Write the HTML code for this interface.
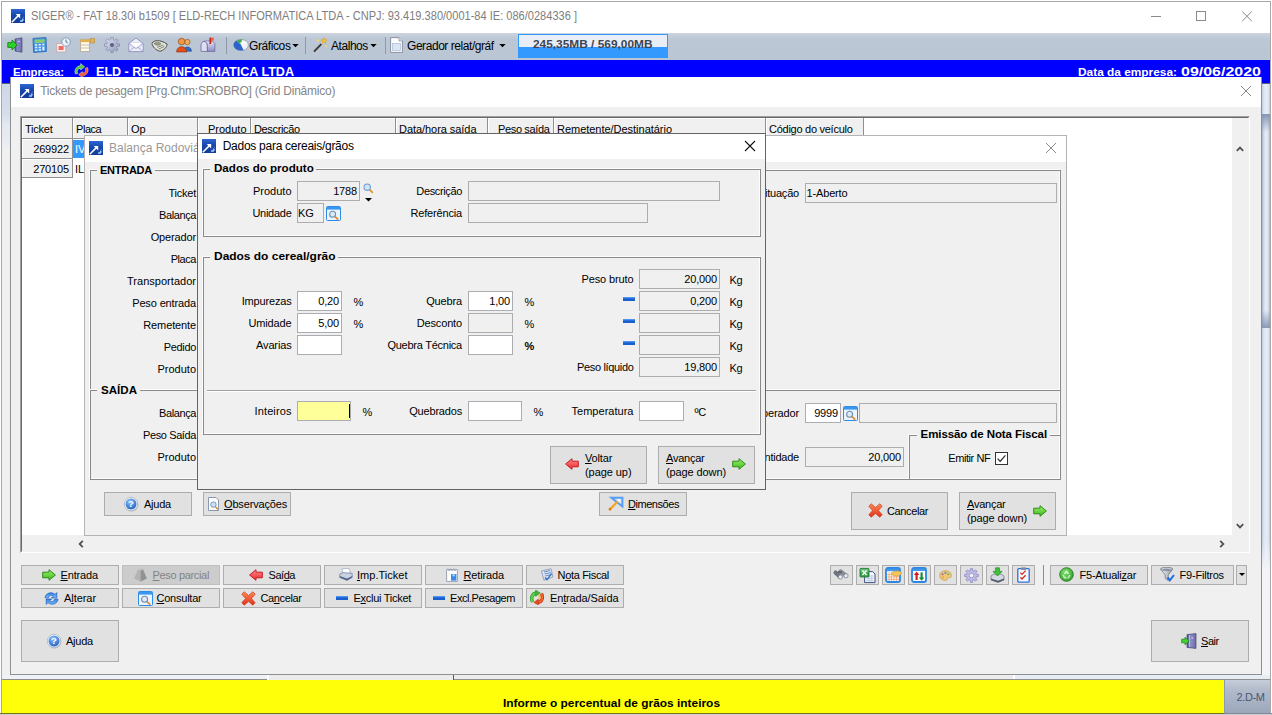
<!DOCTYPE html><html><head><meta charset="utf-8"><title>SIGER</title><style>
html,body{margin:0;padding:0;overflow:hidden}
body{width:1272px;height:715px;overflow:hidden;background:#fff;position:relative;font-family:"Liberation Sans",sans-serif;font-size:11px;color:#000}
div,span,svg{position:absolute;box-sizing:border-box}
.t{white-space:nowrap;line-height:14px;height:14px;letter-spacing:-0.15px}
.r{text-align:right}
.b{font-weight:bold}
.in{border:1px solid #adadad;background:#f0f0f0}
.iw{border:1px solid #abadb3;background:#fff}
.btn{border:1px solid #adadad;background:#e1e1e1}
.gb{border:1px solid #8a8a8a;box-shadow:-1px -1px 0 #fdfdfd,inset -1px -1px 0 #fdfdfd}
.gl{background:#f0f0f0;font-weight:bold;font-size:11.5px;line-height:14px;height:14px;white-space:nowrap;padding:0 3px 0 3px}
.win{background:#f0f0f0}
.tt{font-size:12px;line-height:16px;height:16px;white-space:nowrap}
.hc{background:#f0f0f0;border-right:1px solid #909090;border-bottom:1px solid #909090;box-shadow:inset 1px 1px 0 #fff}
u{text-decoration:underline}
</style></head><body>
<div class="" style="left:0px;top:0px;width:1272px;height:715px;background:#fff"></div>
<div class="" style="left:1px;top:1px;width:1270px;height:713px;border:1px solid #a8a8a8;background:#fff"></div>
<svg style="left:11px;top:9px" width="14" height="14" viewBox="0 0 14 14"><defs><linearGradient id="ai119" x1="0" y1="0" x2="0" y2="1"><stop offset="0" stop-color="#2c66d4"/><stop offset="0.45" stop-color="#1746ac"/><stop offset="1" stop-color="#143c98"/></linearGradient></defs><rect width="14" height="14" fill="url(#ai119)"/><path d="M0.8 13.2 L7.6 6.4" stroke="#fff" stroke-width="1.5" fill="none"/><path d="M4.6 5 H9.2 V9.6 Z" fill="#fff"/><path d="M8.6 12.6 L10 10.4 L10.6 11.4 L12.6 7 L12 10.6 L13.4 10 L11.4 13 Z" fill="#9cc8f8"/></svg>
<span class="t sx" id="t1" style="left:31px;top:9px;letter-spacing:0;transform:scaleX(0.8986);transform-origin:left center;color:#7e7e7e;font-size:12.3px">SIGER® - FAT 18.30i b1509 [ ELD-RECH INFORMATICA LTDA - CNPJ: 93.419.380/0001-84 IE: 086/0284336 ]</span>
<svg style="left:1146px;top:6px" width="112" height="20" viewBox="0 0 112 20"><path d="M5 10.5 H15" stroke="#8a8a8a" stroke-width="1"/><rect x="50.5" y="5.5" width="9" height="9" fill="none" stroke="#8a8a8a"/><path d="M96.2 5.5 L105.8 15.1 M105.8 5.5 L96.2 15.1" stroke="#8a8a8a" stroke-width="1"/></svg>
<div class="" style="left:2px;top:33px;width:1268px;height:27px;background:linear-gradient(#ccd4df 0,#bcc7d6 6px,#bbc6d5 100%)"></div>
<svg style="left:7px;top:37px" width="16" height="16" viewBox="0 0 16 16"><defs><linearGradient id="dg1" x1="0" y1="0" x2="1" y2="0"><stop offset="0" stop-color="#54548e"/><stop offset="0.35" stop-color="#8a8ac4"/><stop offset="1" stop-color="#6e6eaa"/></linearGradient></defs><path d="M8 2 L15 0.8 V15.2 L8 14 Z" fill="url(#dg1)" stroke="#4a4a80" stroke-width="0.7"/><path d="M11.2 4.4 h1.6" stroke="#e8e8ff" stroke-width="1"/><path d="M0.8 5.6 H5 V3 L10 8 L5 13 V10.4 H0.8 Z" fill="#2fd02a" stroke="#168a14" stroke-width="0.9" stroke-linejoin="round"/></svg>
<svg style="left:32px;top:37px" width="15" height="16" viewBox="0 0 15 16"><path d="M1 1.4 L14 0.6 L14.4 14.4 L1.6 15.4 Z" fill="#4a98e4" stroke="#2a6ab8" stroke-width="0.9"/><path d="M2.6 2.8 L12.6 2.2 L12.7 5.6 L2.7 6.2 Z" fill="#86cc70"/><path d="M3 8 h2.2 M6.6 7.8 h2.2 M10.2 7.6 h2.2 M3.1 10.6 h2.2 M6.7 10.4 h2.2 M3.2 13.2 h2.2 M6.8 13 h2.2" stroke="#dff0ff" stroke-width="1.5"/><path d="M11.4 9.6 V13.4" stroke="#dff0ff" stroke-width="2"/></svg>
<svg style="left:56px;top:37px" width="15" height="16" viewBox="0 0 15 16"><rect x="0.8" y="6.4" width="9" height="8.6" fill="#fbeeee" stroke="#c9a6a6" stroke-width="0.8"/><rect x="2.6" y="9" width="5" height="4" fill="#ee6a5a"/><circle cx="10" cy="5" r="4.2" fill="#eaf2fb" stroke="#7d95b8" stroke-width="0.9"/><path d="M10 2.6 V5 L11.8 6" stroke="#47648e" stroke-width="0.9" fill="none"/></svg>
<svg style="left:80px;top:38px" width="15" height="14" viewBox="0 0 15 14"><rect x="0.6" y="1.6" width="9" height="11.8" fill="#fffaf0" stroke="#b2a78e" stroke-width="0.8"/><rect x="0.6" y="1.6" width="9" height="2.6" fill="#e9b04a"/><path d="M1 7 H9.4 M1 10 H9.4" stroke="#b8b09a" stroke-width="0.8"/><rect x="10.6" y="0.6" width="4" height="4.4" fill="#e9b04a" stroke="#b2904a" stroke-width="0.6"/></svg>
<svg style="left:104px;top:37px" width="16" height="16" viewBox="0 0 16 16"><defs><linearGradient id="gg1" x1="0" y1="0" x2="1" y2="1"><stop offset="0" stop-color="#e4e6f4"/><stop offset="1" stop-color="#9094b8"/></linearGradient></defs><path d="M15.50 6.75 L15.50 9.25 L13.23 9.34 L12.65 10.75 L14.18 12.42 L12.42 14.18 L10.75 12.65 L9.34 13.23 L9.25 15.50 L6.75 15.50 L6.66 13.23 L5.25 12.65 L3.58 14.18 L1.82 12.42 L3.35 10.75 L2.77 9.34 L0.50 9.25 L0.50 6.75 L2.77 6.66 L3.35 5.25 L1.82 3.58 L3.58 1.82 L5.25 3.35 L6.66 2.77 L6.75 0.50 L9.25 0.50 L9.34 2.77 L10.75 3.35 L12.42 1.82 L14.18 3.58 L12.65 5.25 L13.23 6.66 Z" fill="url(#gg1)" stroke="#7a7ea4" stroke-width="0.6" stroke-linejoin="round"/><circle cx="8" cy="8" r="2" fill="#5a6080"/></svg>
<svg style="left:128px;top:37px" width="16" height="16" viewBox="0 0 16 16"><path d="M0.8 6.4 L8 1 L15.2 6.4 V14.6 H0.8 Z" fill="#eef0fa" stroke="#8c90c0" stroke-width="0.9" stroke-linejoin="round"/><path d="M2.6 5.4 H13.4 V9.4 L8 12 L2.6 9.4 Z" fill="#ffffff" stroke="#c4c8e0" stroke-width="0.6"/><path d="M0.8 14.6 L6.4 10 M15.2 14.6 L9.6 10 M0.8 6.4 L8 11.4 L15.2 6.4" stroke="#9a9ec8" stroke-width="0.8" fill="none"/></svg>
<svg style="left:151px;top:39px" width="17" height="13" viewBox="0 0 17 13"><path d="M1 4.2 C3 1 9 0.4 16 5 C16.4 8 12 12 8.6 12.2 C5 11 1.4 8 1 4.2 Z" fill="#e2e5dc" stroke="#484c40" stroke-width="1"/><path d="M3 4.6 C5 3 8 3 10 4.6 C9 6.6 5 6.8 3 4.6 Z" fill="#9da192" stroke="#5a5e50" stroke-width="0.6"/><path d="M6 8.4 L12.6 6 M7.6 10 L13.4 7.6" stroke="#6c7062" stroke-width="0.8"/></svg>
<svg style="left:176px;top:37px" width="16" height="16" viewBox="0 0 16 16"><circle cx="11.4" cy="5" r="2.7" fill="#f0b060" stroke="#8a4a10" stroke-width="0.6"/><path d="M7.4 14.2 C7.4 8.6 15.4 8.6 15.4 14.2 Z" fill="#2f6fd0" stroke="#1a3f88" stroke-width="0.6"/><circle cx="5.6" cy="4.6" r="3.3" fill="#f09a40" stroke="#8a3a08" stroke-width="0.6"/><path d="M0.6 15 C0.6 8 10.6 8 10.6 15 Z" fill="#e0501a" stroke="#8a2a08" stroke-width="0.6"/></svg>
<svg style="left:200px;top:37px" width="16" height="16" viewBox="0 0 16 16"><defs><linearGradient id="mb1" x1="0" y1="0" x2="0" y2="1"><stop offset="0" stop-color="#e6e6f8"/><stop offset="1" stop-color="#8e8ec4"/></linearGradient></defs><path d="M1 8.4 C1 3 7.4 3 7.4 8.4 V14.4 H1 Z" fill="#dcdcf2" stroke="#6a6aa0" stroke-width="0.8"/><path d="M4.2 4.4 C6 3.6 13 3.2 14.8 6.4 V14.4 H7.4 V8.4 C7.4 6 6 4.6 4.2 4.4 Z" fill="url(#mb1)" stroke="#6a6aa0" stroke-width="0.8"/><rect x="9.4" y="0.6" width="1.8" height="6.4" fill="#c8281c"/><rect x="11.2" y="0.6" width="2.4" height="3" fill="#f0583a"/></svg>
<div class="" style="left:226px;top:37px;width:1px;height:17px;background:#8e99aa"></div>
<div class="" style="left:305px;top:37px;width:1px;height:17px;background:#8e99aa"></div>
<div class="" style="left:385px;top:37px;width:1px;height:17px;background:#8e99aa"></div>
<svg style="left:233px;top:39px" width="16" height="12" viewBox="0 0 16 12"><defs><clipPath id="gc1"><ellipse cx="8" cy="6" rx="7.4" ry="5.6"/></clipPath></defs><ellipse cx="8" cy="6" rx="7.4" ry="5.6" fill="#eef1f5" stroke="#8e98a8" stroke-width="0.7"/><g clip-path="url(#gc1)"><path d="M8 6 L0 -2 L9 -2 Z" fill="#3fae4a"/><path d="M8 6 L0 -2 L-2 14 L12 14 Z" fill="#2c64cc"/><path d="M8 6 L6 -2 L9 -2 Z" fill="#3fae4a"/></g><ellipse cx="10" cy="4" rx="3" ry="1.6" fill="#fff" opacity="0.7"/></svg>
<span class="t " id="t2" style="left:249px;top:38.5px;letter-spacing:-0.398px;font-size:12px">Gráficos</span>
<svg style="left:292px;top:43.5px" width="7" height="4" viewBox="0 0 7 4"><path d="M0.3 0 H6.7 L3.5 3.3 Z" fill="#000"/></svg>
<svg style="left:313px;top:37px" width="15" height="16" viewBox="0 0 15 16"><path d="M1 14.6 L9 6.4" stroke="#3a3a3a" stroke-width="2"/><path d="M8.4 7 L10.4 5" stroke="#d8d8d8" stroke-width="2"/><path d="M11 0.6 l0.9 2 l2.1 0.3 l-1.6 1.4 l0.4 2.1 l-1.8-1.1 l-1.8 1.1 l0.4-2.1 l-1.6-1.4 l2.1-0.3z" fill="#f6c62a" stroke="#c8900a" stroke-width="0.4"/><circle cx="5" cy="3.4" r="1.2" fill="#f6d85a"/><circle cx="13" cy="9" r="1" fill="#f6d85a"/></svg>
<span class="t " id="t3" style="left:331px;top:38.5px;letter-spacing:-0.450px;font-size:12px">Atalhos</span>
<svg style="left:370px;top:43.5px" width="7" height="4" viewBox="0 0 7 4"><path d="M0.3 0 H6.7 L3.5 3.3 Z" fill="#000"/></svg>
<svg style="left:390px;top:37px" width="13" height="16" viewBox="0 0 13 16"><path d="M0.6 0.6 H9 L12.4 4 V15.4 H0.6 Z" fill="#fdfdfd" stroke="#7e8796" stroke-width="0.9"/><path d="M9 0.6 V4 H12.4" fill="#e1e5ec" stroke="#7e8796" stroke-width="0.7"/><rect x="2.4" y="6.4" width="8" height="7" fill="#dbe6f4" stroke="#a3b4cc" stroke-width="0.6"/></svg>
<span class="t " id="t4" style="left:407px;top:38.5px;letter-spacing:-0.443px;font-size:12px">Gerador relat/gráf</span>
<svg style="left:499px;top:43.5px" width="7" height="4" viewBox="0 0 7 4"><path d="M0.3 0 H6.7 L3.5 3.3 Z" fill="#000"/></svg>
<div class="" style="left:518px;top:34px;width:150px;height:24px;border:1px solid #3399ff;background:linear-gradient(#e9eef6 0,#e9eef6 12px,#3399ff 12px,#3399ff 100%)"></div>
<span class="t b" id="t5" style="left:532.5px;top:37px;letter-spacing:0;transform:scaleX(1.1211);transform-origin:left center;font-size:10.6px;color:#3c4556">245,35MB / 569,00MB</span>
<div class="" style="left:2px;top:60px;width:1268px;height:24px;background:#0000ff"></div>
<div class="" style="left:2px;top:83px;width:1268px;height:1px;background:#5a6478"></div>
<div class="" style="left:2px;top:84px;width:8px;height:596px;background:linear-gradient(#cdd7e6 0,#d5deeb 30px,#e4e8ef 40px,#e9ecf1 60px,#f0f0f1 66px,#f0f0f1 100%)"></div>
<div class="" style="left:1262px;top:84px;width:8px;height:596px;background:linear-gradient(90deg,#c3ccdb 0,#dde5f2 25%,#e6edf8 55%,#dae2ef 85%,#bcc6d6 100%)"></div>
<div class="" style="left:1262px;top:114px;width:8px;height:214px;background:linear-gradient(90deg,#a9b4c8 0,#d6dfee 25%,#e6edf8 55%,#d0d9e8 85%,#9fabc0 100%)"></div>
<div class="" style="left:1262px;top:114px;width:8px;height:18px;background:linear-gradient(rgba(128,146,176,0.95),rgba(128,146,176,0))"></div>
<div class="" style="left:1262px;top:310px;width:8px;height:18px;background:linear-gradient(rgba(128,146,176,0),rgba(128,146,176,0.9))"></div>
<div class="" style="left:1262px;top:540px;width:8px;height:140px;background:linear-gradient(rgba(242,244,248,0),rgba(242,244,248,1) 30px)"></div>
<span class="t b" id="t6" style="left:13px;top:64.5px;letter-spacing:-0.178px;color:#fff;font-size:11.5px">Empresa:</span>
<svg style="left:74px;top:63px" width="15" height="15" viewBox="0 0 15 15"><path d="M1.4 11 A6 6 0 0 1 6.6 2.6 V0.6 L10.6 3.8 L6.6 7 V5.2 A3.4 3.4 0 0 0 3.8 10.4 Z" fill="#4fc63a" stroke="#d8ffd0" stroke-width="0.5"/><path d="M13.6 4.6 A6 6 0 0 1 8.4 13 V14.8 L4.6 11.6 L8.4 8.6 V10.2 A3.4 3.4 0 0 0 11.2 5.2 Z" fill="#f05a2a" stroke="#ffd0b0" stroke-width="0.5"/></svg>
<span class="t b" id="t7" style="left:96px;top:65px;letter-spacing:0;transform:scaleX(1.0219);transform-origin:left center;color:#fff;font-size:12.3px">ELD - RECH INFORMATICA LTDA</span>
<span class="t b" id="t8" style="left:1077.6px;top:64.5px;letter-spacing:0;transform:scaleX(1.0326);transform-origin:left center;color:#fff;font-size:11.5px">Data da empresa:</span>
<span class="t b" id="t9" style="left:1181px;top:65px;letter-spacing:0;transform:scaleX(1.2787);transform-origin:left center;color:#fff;font-size:12.5px">09/06/2020</span>
<div class="win" style="left:10px;top:77px;width:1252px;height:598px;border:1px solid #8f9094;border-top:0;background:#f0f0f0"></div>
<div class="" style="left:11px;top:77px;width:1250px;height:30px;background:#fff"></div>
<svg style="left:20px;top:84px" width="14" height="14" viewBox="0 0 14 14"><defs><linearGradient id="ai2084" x1="0" y1="0" x2="0" y2="1"><stop offset="0" stop-color="#2c66d4"/><stop offset="0.45" stop-color="#1746ac"/><stop offset="1" stop-color="#143c98"/></linearGradient></defs><rect width="14" height="14" fill="url(#ai2084)"/><path d="M0.8 13.2 L7.6 6.4" stroke="#fff" stroke-width="1.5" fill="none"/><path d="M4.6 5 H9.2 V9.6 Z" fill="#fff"/><path d="M8.6 12.6 L10 10.4 L10.6 11.4 L12.6 7 L12 10.6 L13.4 10 L11.4 13 Z" fill="#9cc8f8"/></svg>
<span class="t " id="t10" style="left:40.2px;top:84.4px;letter-spacing:-0.235px;color:#868686;font-size:12px">Tickets de pesagem [Prg.Chm:SROBRO] (Grid Dinâmico)</span>
<svg style="left:1240px;top:85px" width="12" height="12" viewBox="0 0 12 12"><path d="M1 1 L11 11 M11 1 L1 11" stroke="#8a8a8a" stroke-width="1"/></svg>
<div class="" style="left:20px;top:116px;width:1230px;height:437px;background:#fff;border-top:1px solid #a0a0a0;border-left:1px solid #a0a0a0;border-right:1px solid #fff;border-bottom:1px solid #fff"></div>
<div class="" style="left:21px;top:117px;width:1228px;height:435px;background:#fff;border-top:1px solid #696969;border-left:1px solid #696969;border-right:1px solid #e3e3e3;border-bottom:1px solid #e3e3e3"></div>
<div class="" style="left:1232px;top:118px;width:17px;height:417px;background:#f0f0f0"></div>
<div class="" style="left:22px;top:535px;width:1227px;height:17px;background:#f0f0f0"></div>
<svg style="left:1236px;top:146px" width="8" height="6" viewBox="0 0 8 6"><path d="M0.8 4.8 L4 1.6 L7.2 4.8" stroke="#505050" stroke-width="1.8" fill="none"/></svg>
<svg style="left:1236px;top:523px" width="8" height="6" viewBox="0 0 8 6"><path d="M0.8 1.2 L4 4.4 L7.2 1.2" stroke="#505050" stroke-width="1.8" fill="none"/></svg>
<svg style="left:78px;top:540px" width="6" height="8" viewBox="0 0 6 8"><path d="M4.8 0.8 L1.6 4 L4.8 7.2" stroke="#505050" stroke-width="1.8" fill="none"/></svg>
<svg style="left:1219px;top:540px" width="6" height="8" viewBox="0 0 6 8"><path d="M1.2 0.8 L4.4 4 L1.2 7.2" stroke="#505050" stroke-width="1.8" fill="none"/></svg>
<div class="hc" style="left:22px;top:118px;width:51px;height:21px;"></div>
<span class="t " id="t11" style="left:25px;top:121.5px;letter-spacing:-0.240px;">Ticket</span>
<div class="hc" style="left:73px;top:118px;width:55px;height:21px;"></div>
<span class="t " id="t12" style="left:76px;top:121.5px;letter-spacing:-0.450px;">Placa</span>
<div class="hc" style="left:128px;top:118px;width:70px;height:21px;"></div>
<span class="t " id="t13" style="left:131px;top:121.5px;">Op</span>
<div class="hc" style="left:198px;top:118px;width:53px;height:21px;"></div>
<span class="t r " id="t14" style="right:1025.5px;top:121.5px;letter-spacing:-0.004px;">Produto</span>
<div class="hc" style="left:251px;top:118px;width:145px;height:21px;"></div>
<span class="t " id="t15" style="left:254px;top:121.5px;letter-spacing:-0.356px;">Descrição</span>
<div class="hc" style="left:396px;top:118px;width:92px;height:21px;"></div>
<span class="t " id="t16" style="left:399px;top:121.5px;letter-spacing:-0.052px;">Data/hora saída</span>
<div class="hc" style="left:488px;top:118px;width:66px;height:21px;"></div>
<span class="t r " id="t17" style="right:722.5px;top:121.5px;letter-spacing:-0.355px;">Peso saída</span>
<div class="hc" style="left:554px;top:118px;width:212px;height:21px;"></div>
<span class="t " id="t18" style="left:557px;top:121.5px;letter-spacing:-0.026px;">Remetente/Destinatário</span>
<div class="hc" style="left:766px;top:118px;width:98px;height:21px;"></div>
<span class="t " id="t19" style="left:769px;top:121.5px;letter-spacing:-0.268px;">Código do veículo</span>
<div class="hc" style="left:22px;top:139px;width:51px;height:20px;"></div>
<span class="t r " id="t20" style="right:1203px;top:142px;">269922</span>
<div class="hc" style="left:22px;top:159px;width:51px;height:19px;"></div>
<span class="t r " id="t21" style="right:1203px;top:161.5px;">270105</span>
<div class="" style="left:73px;top:140px;width:60px;height:18px;background:#3399ff"></div>
<span class="t " id="t22" style="left:75px;top:142px;color:#fff">IVX-0000</span>
<span class="t " id="t23" style="left:75px;top:161.5px;">ILI-0000</span>
<div class="win" style="left:84px;top:135px;width:983px;height:401px;border:1px solid #b4b4b4;background:#f0f0f0"></div>
<div class="" style="left:85px;top:136px;width:981px;height:26px;background:#fff"></div>
<svg style="left:89px;top:141px" width="14" height="14" viewBox="0 0 14 14"><defs><linearGradient id="ai89141" x1="0" y1="0" x2="0" y2="1"><stop offset="0" stop-color="#2c66d4"/><stop offset="0.45" stop-color="#1746ac"/><stop offset="1" stop-color="#143c98"/></linearGradient></defs><rect width="14" height="14" fill="url(#ai89141)"/><path d="M0.8 13.2 L7.6 6.4" stroke="#fff" stroke-width="1.5" fill="none"/><path d="M4.6 5 H9.2 V9.6 Z" fill="#fff"/><path d="M8.6 12.6 L10 10.4 L10.6 11.4 L12.6 7 L12 10.6 L13.4 10 L11.4 13 Z" fill="#9cc8f8"/></svg>
<span class="t " id="t24" style="left:109px;top:141px;letter-spacing:-0.003px;color:#999;font-size:12px">Balança Rodoviária</span>
<svg style="left:1045px;top:142px" width="12" height="12" viewBox="0 0 12 12"><path d="M1 1 L11 11 M11 1 L1 11" stroke="#8a8a8a" stroke-width="1"/></svg>
<div class="gb" style="left:90px;top:170px;width:971px;height:221px;"></div>
<div class="" style="left:97px;top:164px;width:58px;height:12px;background:#f0f0f0"></div>
<span class="t b" id="t25" style="left:100px;top:163px;letter-spacing:-0.254px;font-size:11px">ENTRADA</span>
<span class="t r " id="t26" style="right:1076px;top:186px;letter-spacing:-0.240px;">Ticket</span>
<span class="t r " id="t27" style="right:1076px;top:208px;letter-spacing:-0.395px;">Balança</span>
<span class="t r " id="t28" style="right:1076px;top:230px;letter-spacing:-0.148px;">Operador</span>
<span class="t r " id="t29" style="right:1076px;top:252px;letter-spacing:-0.450px;">Placa</span>
<span class="t r " id="t30" style="right:1076px;top:274px;letter-spacing:0.024px;">Transportador</span>
<span class="t r " id="t31" style="right:1076px;top:296px;letter-spacing:-0.136px;">Peso entrada</span>
<span class="t r " id="t32" style="right:1076px;top:318px;letter-spacing:-0.124px;">Remetente</span>
<span class="t r " id="t33" style="right:1076px;top:340px;letter-spacing:-0.344px;">Pedido</span>
<span class="t r " id="t34" style="right:1076px;top:362px;letter-spacing:-0.004px;">Produto</span>
<span class="t r " id="t35" style="right:473px;top:186px;letter-spacing:-0.202px;">Situação</span>
<div class="in" style="left:805px;top:183px;width:252px;height:20px;"></div>
<span class="t " id="t36" style="left:806.5px;top:186px;">1-Aberto</span>
<div class="gb" style="left:90px;top:390px;width:971px;height:90px;"></div>
<div class="" style="left:97px;top:384px;width:43px;height:12px;background:#f0f0f0"></div>
<span class="t b" id="t37" style="left:100.6px;top:383px;letter-spacing:0;transform:scaleX(1.0061);transform-origin:left center;font-size:11.5px">SAÍDA</span>
<span class="t r " id="t38" style="right:1076px;top:406px;letter-spacing:-0.395px;">Balança</span>
<span class="t r " id="t39" style="right:1076px;top:428px;letter-spacing:-0.388px;">Peso Saída</span>
<span class="t r " id="t40" style="right:1076px;top:450px;letter-spacing:-0.004px;">Produto</span>
<span class="t r " id="t41" style="right:473px;top:406px;letter-spacing:-0.148px;">Operador</span>
<div class="iw" style="left:805px;top:403px;width:36px;height:20px;"></div>
<span class="t r " id="t42" style="right:434px;top:406px;">9999</span>
<svg style="left:843px;top:406px" width="15" height="15" viewBox="0 0 15 15"><rect x="0.5" y="0.5" width="14" height="14" rx="1" fill="#eaf4ff" stroke="#2f8be6"/><rect x="1" y="1" width="13" height="2.6" fill="#3b97ee"/><circle cx="6.6" cy="8.2" r="3" fill="#dfeaf4" stroke="#6e8fae" stroke-width="1.1"/><path d="M9 10.6 L12.2 13.6" stroke="#e08a2a" stroke-width="1.8"/></svg>
<div class="in" style="left:859px;top:403px;width:198px;height:20px;"></div>
<span class="t r " id="t43" style="right:473px;top:450px;letter-spacing:-0.239px;">Quantidade</span>
<div class="in" style="left:805px;top:447px;width:99px;height:20px;"></div>
<span class="t r " id="t44" style="right:371px;top:450px;">20,000</span>
<div class="gb" style="left:909px;top:435px;width:152px;height:45px;"></div>
<div class="" style="left:917px;top:429px;width:133px;height:12px;background:#f0f0f0"></div>
<span class="t b" id="t45" style="left:920.6px;top:427px;letter-spacing:-0.094px;font-size:11.5px">Emissão de Nota Fiscal</span>
<span class="t " id="t46" style="left:948.3px;top:451px;letter-spacing:-0.425px;">Emitir NF</span>
<svg style="left:995px;top:452px" width="13" height="13" viewBox="0 0 13 13"><rect x="0.5" y="0.5" width="12" height="12" fill="#fff" stroke="#333"/><path d="M2.6 6.6 L5.2 9.4 L10.4 3.4" stroke="#222" stroke-width="1.2" fill="none"/></svg>
<div class="btn" style="left:104px;top:492px;width:88px;height:24px;"></div>
<svg style="left:123px;top:496px" width="16" height="16" viewBox="0 0 16 16"><defs><radialGradient id="hg124497" cx="0.4" cy="0.3" r="0.8"><stop offset="0" stop-color="#8cc4fa"/><stop offset="1" stop-color="#1a58c0"/></radialGradient></defs><circle cx="8.5" cy="8.7" r="6.9" fill="#8d97a8" opacity="0.6"/><circle cx="8" cy="8" r="6.7" fill="#f6f8fb" stroke="#a4adbc" stroke-width="0.7"/><circle cx="8" cy="8" r="5.5" fill="url(#hg124497)"/><text x="8" y="11.4" font-family="Liberation Sans" font-size="9.5" font-weight="bold" fill="#fff" text-anchor="middle">?</text></svg>
<span class="t " id="t47" style="left:144px;top:497px;letter-spacing:-0.231px;">A<u>j</u>uda</span>
<div class="btn" style="left:203px;top:492px;width:88px;height:24px;"></div>
<svg style="left:207px;top:497px" width="13" height="14" viewBox="0 0 13 14"><path d="M1.5 0.5 H9 L11.5 3 V13.5 H1.5 Z" fill="#fdfdfd" stroke="#8a98b0"/><circle cx="6.4" cy="7.6" r="2.7" fill="#cfe3f7" stroke="#6f94c0"/><path d="M8.4 9.8 L11 12.4" stroke="#e0902a" stroke-width="1.6"/></svg>
<span class="t " id="t48" style="left:224px;top:497px;letter-spacing:-0.061px;letter-spacing:-0.15px"><u>O</u>bservações</span>
<div class="btn" style="left:599px;top:492px;width:88px;height:24px;"></div>
<svg style="left:608px;top:496px" width="16" height="15" viewBox="0 0 16 15"><path d="M0.6 0.8 H15.4 V12.4 Z" fill="#5a9cf4"/><path d="M6.4 2.8 H13.4 V8.4 Z" fill="#d4e5fc"/><path d="M1.2 14 L10.2 5" stroke="#f0a828" stroke-width="2.4"/><path d="M1.2 14 L2.8 12.4" stroke="#e07818" stroke-width="2.4"/><path d="M10 5.2 L11.8 3.4" stroke="#fff" stroke-width="2"/></svg>
<span class="t " id="t49" style="left:628px;top:497px;letter-spacing:-0.450px;"><u>D</u>imensões</span>
<div class="btn" style="left:851px;top:492px;width:97px;height:38px;"></div>
<svg style="left:868px;top:503px" width="15" height="15" viewBox="0 0 15 15"><defs><linearGradient id="xg868503" x1="0" y1="0" x2="0" y2="1"><stop offset="0" stop-color="#ff8a52"/><stop offset="1" stop-color="#e0321c"/></linearGradient></defs><path d="M3.2 0.8 L7.5 4.6 L11.8 0.8 L14.2 3.2 L10.4 7.5 L14.2 11.8 L11.8 14.2 L7.5 10.4 L3.2 14.2 L0.8 11.8 L4.6 7.5 L0.8 3.2 Z" fill="url(#xg868503)" stroke="#c8381e" stroke-width="0.7" stroke-linejoin="round"/></svg>
<span class="t " id="t50" style="left:887px;top:504px;letter-spacing:-0.379px;">Cancelar</span>
<div class="btn" style="left:959px;top:492px;width:97px;height:38px;"></div>
<span class="t " id="t51" style="left:967px;top:497px;letter-spacing:-0.239px;"><u>A</u>vançar</span>
<span class="t " id="t52" style="left:967px;top:511px;letter-spacing:-0.105px;">(page down)</span>
<svg style="left:1033px;top:504.5px" width="14" height="12" viewBox="0 0 14 12"><defs><linearGradient id="ag1033504" x1="0" y1="0" x2="0" y2="1"><stop offset="0" stop-color="#9af06a"/><stop offset="1" stop-color="#3fb81e"/></linearGradient></defs><path d="M0.7 3.2 H7 V0.7 L13.4 6 L7 11.3 V8.8 H0.7 Z" fill="url(#ag1033504)" stroke="#2c8a18" stroke-width="1" stroke-linejoin="round"/></svg>
<div class="win" style="left:197px;top:133px;width:569px;height:357px;border:1px solid #646464;background:#f0f0f0"></div>
<div class="" style="left:198px;top:134px;width:567px;height:25px;background:#fff"></div>
<svg style="left:202px;top:139px" width="14" height="14" viewBox="0 0 14 14"><defs><linearGradient id="ai202139" x1="0" y1="0" x2="0" y2="1"><stop offset="0" stop-color="#2c66d4"/><stop offset="0.45" stop-color="#1746ac"/><stop offset="1" stop-color="#143c98"/></linearGradient></defs><rect width="14" height="14" fill="url(#ai202139)"/><path d="M0.8 13.2 L7.6 6.4" stroke="#fff" stroke-width="1.5" fill="none"/><path d="M4.6 5 H9.2 V9.6 Z" fill="#fff"/><path d="M8.6 12.6 L10 10.4 L10.6 11.4 L12.6 7 L12 10.6 L13.4 10 L11.4 13 Z" fill="#9cc8f8"/></svg>
<span class="t " id="t53" style="left:222.7px;top:139px;letter-spacing:-0.268px;color:#000;font-size:12px">Dados para cereais/grãos</span>
<svg style="left:744px;top:140px" width="12" height="12" viewBox="0 0 12 12"><path d="M1 1 L11 11 M11 1 L1 11" stroke="#111" stroke-width="1.1"/></svg>
<div class="gb" style="left:203px;top:169px;width:558px;height:68px;"></div>
<div class="" style="left:210px;top:163px;width:106px;height:12px;background:#f0f0f0"></div>
<span class="t b" id="t54" style="left:213.5px;top:161px;letter-spacing:0;transform:scaleX(1.0079);transform-origin:left center;font-size:11.5px">Dados do produto</span>
<span class="t r " id="t55" style="right:980.5px;top:184px;letter-spacing:-0.004px;">Produto</span>
<div class="in" style="left:297px;top:181px;width:63px;height:20px;"></div>
<span class="t r " id="t56" style="right:915px;top:184px;">1788</span>
<svg style="left:363px;top:183px" width="11" height="11" viewBox="0 0 11 11"><circle cx="4.2" cy="4.2" r="3.2" fill="#cfe4f8" stroke="#6f9bd0" stroke-width="1.1"/><path d="M6.6 6.6 L9.8 9.8" stroke="#e0902a" stroke-width="1.8"/></svg>
<svg style="left:365px;top:198px" width="7" height="4" viewBox="0 0 7 4"><path d="M0 0 H7 L3.5 3.6 Z" fill="#000"/></svg>
<span class="t r " id="t57" style="right:810px;top:184px;letter-spacing:-0.356px;">Descrição</span>
<div class="in" style="left:468px;top:181px;width:252px;height:20px;"></div>
<span class="t r " id="t58" style="right:980.5px;top:206px;letter-spacing:-0.269px;">Unidade</span>
<div class="in" style="left:297px;top:203px;width:27px;height:20px;"></div>
<span class="t " id="t59" style="left:298px;top:206px;">KG</span>
<svg style="left:326px;top:206px" width="15" height="15" viewBox="0 0 15 15"><rect x="0.5" y="0.5" width="14" height="14" rx="1" fill="#eaf4ff" stroke="#2f8be6"/><rect x="1" y="1" width="13" height="2.6" fill="#3b97ee"/><circle cx="6.6" cy="8.2" r="3" fill="#dfeaf4" stroke="#6e8fae" stroke-width="1.1"/><path d="M9 10.6 L12.2 13.6" stroke="#e08a2a" stroke-width="1.8"/></svg>
<span class="t r " id="t60" style="right:810px;top:206px;letter-spacing:-0.160px;">Referência</span>
<div class="in" style="left:468px;top:203px;width:180px;height:20px;"></div>
<div class="gb" style="left:203px;top:257px;width:558px;height:178px;"></div>
<div class="" style="left:210px;top:251px;width:128px;height:12px;background:#f0f0f0"></div>
<span class="t b" id="t61" style="left:213.5px;top:249px;letter-spacing:0;transform:scaleX(1.0387);transform-origin:left center;font-size:11.5px">Dados do cereal/grão</span>
<div class="in" style="left:639px;top:269px;width:81px;height:20px;"></div>
<span class="t r " id="t62" style="right:555px;top:272px;">20,000</span>
<span class="t " id="t63" style="left:729.5px;top:273px;letter-spacing:-0.450px;">Kg</span>
<div class="in" style="left:639px;top:291px;width:81px;height:20px;"></div>
<span class="t r " id="t64" style="right:555px;top:294px;">0,200</span>
<span class="t " id="t65" style="left:729.5px;top:295px;letter-spacing:-0.450px;">Kg</span>
<svg style="left:623px;top:297px" width="12" height="4" viewBox="0 0 12 4"><rect width="12" height="4" fill="#1a5fd0"/><rect y="0" width="12" height="1.3" fill="#4f94ee"/></svg>
<div class="in" style="left:639px;top:313px;width:81px;height:20px;"></div>
<span class="t " id="t66" style="left:729.5px;top:317px;letter-spacing:-0.450px;">Kg</span>
<svg style="left:623px;top:319px" width="12" height="4" viewBox="0 0 12 4"><rect width="12" height="4" fill="#1a5fd0"/><rect y="0" width="12" height="1.3" fill="#4f94ee"/></svg>
<div class="in" style="left:639px;top:335px;width:81px;height:20px;"></div>
<span class="t " id="t67" style="left:729.5px;top:339px;letter-spacing:-0.450px;">Kg</span>
<svg style="left:623px;top:341px" width="12" height="4" viewBox="0 0 12 4"><rect width="12" height="4" fill="#1a5fd0"/><rect y="0" width="12" height="1.3" fill="#4f94ee"/></svg>
<div class="in" style="left:639px;top:357px;width:81px;height:20px;"></div>
<span class="t r " id="t68" style="right:555px;top:360px;">19,800</span>
<span class="t " id="t69" style="left:729.5px;top:361px;letter-spacing:-0.450px;">Kg</span>
<span class="t r " id="t70" style="right:638.5px;top:272px;letter-spacing:-0.120px;">Peso bruto</span>
<span class="t r " id="t71" style="right:638.5px;top:360px;letter-spacing:-0.337px;">Peso líquido</span>
<span class="t r " id="t72" style="right:980.5px;top:294px;letter-spacing:-0.173px;">Impurezas</span>
<div class="iw" style="left:297px;top:291px;width:45px;height:20px;"></div>
<span class="t r " id="t73" style="right:933px;top:294px;">0,20</span>
<span class="t " id="t74" style="left:353.5px;top:295px;">%</span>
<span class="t r " id="t75" style="right:980.5px;top:316px;">Umidade</span>
<div class="iw" style="left:297px;top:313px;width:45px;height:20px;"></div>
<span class="t r " id="t76" style="right:933px;top:316px;">5,00</span>
<span class="t " id="t77" style="left:353.5px;top:317px;">%</span>
<span class="t r " id="t78" style="right:980.5px;top:338px;">Avarias</span>
<div class="iw" style="left:297px;top:335px;width:45px;height:20px;"></div>
<span class="t r " id="t79" style="right:810px;top:294px;">Quebra</span>
<div class="iw" style="left:468px;top:291px;width:45px;height:20px;"></div>
<span class="t r " id="t80" style="right:762px;top:294px;">1,00</span>
<span class="t " id="t81" style="left:524.5px;top:295px;">%</span>
<span class="t r " id="t82" style="right:810px;top:316px;">Desconto</span>
<div class="in" style="left:468px;top:313px;width:45px;height:20px;"></div>
<span class="t " id="t83" style="left:524.5px;top:317px;">%</span>
<span class="t r " id="t84" style="right:810px;top:338px;letter-spacing:-0.006px;letter-spacing:-0.25px">Quebra Técnica</span>
<div class="iw" style="left:468px;top:335px;width:45px;height:20px;"></div>
<span class="t b" id="t85" style="left:524.5px;top:339px;">%</span>
<div class="" style="left:207px;top:390px;width:549px;height:1px;background:#a0a0a0"></div>
<div class="" style="left:207px;top:391px;width:549px;height:1px;background:#fff"></div>
<span class="t r " id="t86" style="right:980.5px;top:404px;letter-spacing:0.103px;">Inteiros</span>
<div class="" style="left:297px;top:401px;width:54px;height:20px;border:1px solid #abadb3;background:#ffff99"></div>
<div class="" style="left:349px;top:404px;width:1px;height:14px;background:#000"></div>
<span class="t " id="t87" style="left:362.5px;top:405px;">%</span>
<span class="t r " id="t88" style="right:810px;top:404px;letter-spacing:-0.182px;">Quebrados</span>
<div class="iw" style="left:468px;top:401px;width:54px;height:20px;"></div>
<span class="t " id="t89" style="left:533.5px;top:405px;">%</span>
<span class="t r " id="t90" style="right:638.5px;top:404px;letter-spacing:0.021px;">Temperatura</span>
<div class="iw" style="left:639px;top:401px;width:45px;height:20px;"></div>
<span class="t " id="t91" style="left:694.5px;top:405px;">ºC</span>
<div class="btn" style="left:550px;top:446px;width:97px;height:38px;"></div>
<svg style="left:565px;top:458px" width="14" height="12" viewBox="0 0 14 12"><defs><linearGradient id="rg565458" x1="0" y1="0" x2="0" y2="1"><stop offset="0" stop-color="#ff8c8c"/><stop offset="1" stop-color="#e8282e"/></linearGradient></defs><path d="M13.3 3.2 H7 V0.7 L0.6 6 L7 11.3 V8.8 H13.3 Z" fill="url(#rg565458)" stroke="#c81c22" stroke-width="1" stroke-linejoin="round"/></svg>
<span class="t " id="t92" style="left:585px;top:451px;"><u>V</u>oltar</span>
<span class="t " id="t93" style="left:585px;top:465px;letter-spacing:-0.066px;">(page up)</span>
<div class="btn" style="left:658px;top:446px;width:97px;height:38px;"></div>
<span class="t " id="t94" style="left:666px;top:451px;letter-spacing:-0.239px;"><u>A</u>vançar</span>
<span class="t " id="t95" style="left:666px;top:465px;letter-spacing:-0.105px;">(page down)</span>
<svg style="left:732px;top:458px" width="14" height="12" viewBox="0 0 14 12"><defs><linearGradient id="ag732458" x1="0" y1="0" x2="0" y2="1"><stop offset="0" stop-color="#9af06a"/><stop offset="1" stop-color="#3fb81e"/></linearGradient></defs><path d="M0.7 3.2 H7 V0.7 L13.4 6 L7 11.3 V8.8 H0.7 Z" fill="url(#ag732458)" stroke="#2c8a18" stroke-width="1" stroke-linejoin="round"/></svg>
<div class="btn" style="left:21px;top:565px;width:98px;height:20px;"></div>
<div class="btn" style="left:21px;top:588px;width:98px;height:20px;"></div>
<div class="btn" style="left:122px;top:565px;width:98px;height:20px;"></div>
<div class="btn" style="left:122px;top:588px;width:98px;height:20px;"></div>
<div class="btn" style="left:223px;top:565px;width:98px;height:20px;"></div>
<div class="btn" style="left:223px;top:588px;width:98px;height:20px;"></div>
<div class="btn" style="left:324px;top:565px;width:98px;height:20px;"></div>
<div class="btn" style="left:324px;top:588px;width:98px;height:20px;"></div>
<div class="btn" style="left:425px;top:565px;width:98px;height:20px;"></div>
<div class="btn" style="left:425px;top:588px;width:98px;height:20px;"></div>
<div class="btn" style="left:526px;top:565px;width:98px;height:20px;"></div>
<div class="btn" style="left:526px;top:588px;width:98px;height:20px;"></div>
<div class="" style="left:122px;top:565px;width:98px;height:20px;border:1px solid #bfbfbf;background:#cccccc"></div>
<svg style="left:42px;top:568.5px" width="14" height="12" viewBox="0 0 14 12"><defs><linearGradient id="ag42568" x1="0" y1="0" x2="0" y2="1"><stop offset="0" stop-color="#9af06a"/><stop offset="1" stop-color="#3fb81e"/></linearGradient></defs><path d="M0.7 3.2 H7 V0.7 L13.4 6 L7 11.3 V8.8 H0.7 Z" fill="url(#ag42568)" stroke="#2c8a18" stroke-width="1" stroke-linejoin="round"/></svg>
<span class="t " id="t96" style="left:60.5px;top:568px;letter-spacing:-0.150px;"><u>E</u>ntrada</span>
<svg style="left:133px;top:567px" width="15" height="15" viewBox="0 0 15 15"><path d="M5 2.4 L7.6 0.8 L10 2.4 L13.8 11.6 L7.6 14.4 L1 11.6 Z" fill="#b4b4b4"/><path d="M7.6 0.8 L10 2.4 L13.8 11.6 L7.6 14.4 Z" fill="#929292"/><path d="M5 2.4 L7.6 3.6 L10 2.4 L7.6 0.8 Z" fill="#c8c8c8"/></svg>
<span class="t " id="t97" style="left:152.5px;top:568px;letter-spacing:-0.337px;color:#838383"><u>P</u>eso parcial</span>
<svg style="left:248.5px;top:568.5px" width="14" height="12" viewBox="0 0 14 12"><defs><linearGradient id="rg248568" x1="0" y1="0" x2="0" y2="1"><stop offset="0" stop-color="#ff8c8c"/><stop offset="1" stop-color="#e8282e"/></linearGradient></defs><path d="M13.3 3.2 H7 V0.7 L0.6 6 L7 11.3 V8.8 H13.3 Z" fill="url(#rg248568)" stroke="#c81c22" stroke-width="1" stroke-linejoin="round"/></svg>
<span class="t " id="t98" style="left:268.5px;top:568px;letter-spacing:-0.450px;">Saí<u>d</u>a</span>
<svg style="left:339px;top:568px" width="14" height="13" viewBox="0 0 14 13"><path d="M3 0.8 L10 0.4 L11.6 5 L4 6 Z" fill="#fff" stroke="#9aa7bd" stroke-width="0.7"/><path d="M0.8 6 L4 4.6 L13.2 5.4 L13.2 9.4 L8 12.4 L0.8 9.6 Z" fill="#c9d3e4" stroke="#6c7c98" stroke-width="0.7"/><path d="M0.8 9.6 L8 12.4 L13.2 9.4 L13.2 8 L8 10.6 L0.8 8 Z" fill="#56678a"/></svg>
<span class="t " id="t99" style="left:357px;top:568px;letter-spacing:0.017px;"><u>I</u>mp.Ticket</span>
<svg style="left:446px;top:568px" width="12" height="14" viewBox="0 0 12 14"><path d="M0.6 1.6 H11.4 V13.4 H0.6 Z" fill="#fdfdfd" stroke="#9aa3b4"/><path d="M1 1 h1.5 v1.5 h1.5 v-1.5 h1.5 v1.5 h1.5 v-1.5 h1.5 v1.5 h1.5" stroke="#9aa3b4" fill="none" stroke-width="0.7"/><rect x="5" y="6" width="5.4" height="6.6" fill="#3b8ae6"/><circle cx="7.7" cy="7.2" r="1.3" fill="#9fd0ff"/></svg>
<span class="t " id="t100" style="left:463.5px;top:568px;letter-spacing:-0.137px;"><u>R</u>etirada</span>
<svg style="left:540px;top:568px" width="14" height="13" viewBox="0 0 14 13"><path d="M1.4 3 L11 0.8 L13 9 L4 12.2 Z" fill="#dce6f2" stroke="#7f95b6" stroke-width="0.8"/><path d="M4 4 L10 2.6 M4.6 6 L11 4.6 M5.2 8 L11.4 6.6" stroke="#5f86c0" stroke-width="0.9"/><path d="M5 9.6 L7 11.6 L11.6 5.6" stroke="#3c6fc0" stroke-width="1.4" fill="none"/></svg>
<span class="t " id="t101" style="left:557.5px;top:568px;letter-spacing:-0.322px;">N<u>o</u>ta Fiscal</span>
<svg style="left:44px;top:590.5px" width="15" height="15" viewBox="0 0 15 15"><defs><linearGradient id="rfg" x1="0" y1="0" x2="0" y2="1"><stop offset="0" stop-color="#2f80e4"/><stop offset="1" stop-color="#7cc0fc"/></linearGradient></defs><path d="M1 6.8 C1.4 1.8 8 0.4 11 3.4 L12.8 1.6 V7 H7.4 L9.2 5.2 C7.6 3.6 4.8 4.2 4.4 6.8 Z" fill="url(#rfg)" stroke="#1c5cc0" stroke-width="0.7" stroke-linejoin="round"/><path d="M14 8.2 C13.6 13.2 7 14.6 4 11.6 L2.2 13.4 V8 H7.6 L5.8 9.8 C7.4 11.4 10.2 10.8 10.6 8.2 Z" fill="url(#rfg)" stroke="#1c5cc0" stroke-width="0.7" stroke-linejoin="round"/></svg>
<span class="t " id="t102" style="left:64px;top:591px;letter-spacing:-0.060px;">A<u>l</u>terar</span>
<svg style="left:138px;top:591px" width="15" height="15" viewBox="0 0 15 15"><rect x="0.5" y="0.5" width="14" height="14" rx="1" fill="#eaf4ff" stroke="#2f8be6"/><rect x="1" y="1" width="13" height="2.6" fill="#3b97ee"/><circle cx="6.6" cy="8.2" r="3" fill="#dfeaf4" stroke="#6e8fae" stroke-width="1.1"/><path d="M9 10.6 L12.2 13.6" stroke="#e08a2a" stroke-width="1.8"/></svg>
<span class="t " id="t103" style="left:156.5px;top:591px;letter-spacing:-0.233px;"><u>C</u>onsultar</span>
<svg style="left:241px;top:591px" width="15" height="15" viewBox="0 0 15 15"><defs><linearGradient id="xg241591" x1="0" y1="0" x2="0" y2="1"><stop offset="0" stop-color="#ff8a52"/><stop offset="1" stop-color="#e0321c"/></linearGradient></defs><path d="M3.2 0.8 L7.5 4.6 L11.8 0.8 L14.2 3.2 L10.4 7.5 L14.2 11.8 L11.8 14.2 L7.5 10.4 L3.2 14.2 L0.8 11.8 L4.6 7.5 L0.8 3.2 Z" fill="url(#xg241591)" stroke="#c8381e" stroke-width="0.7" stroke-linejoin="round"/></svg>
<span class="t " id="t104" style="left:260.5px;top:591px;letter-spacing:-0.379px;">Ca<u>n</u>celar</span>
<svg style="left:336px;top:596px" width="12" height="4" viewBox="0 0 12 4"><rect width="12" height="4" fill="#1a5fd0"/><rect y="0" width="12" height="1.3" fill="#4f94ee"/></svg>
<span class="t " id="t105" style="left:353.5px;top:591px;letter-spacing:-0.280px;">E<u>x</u>clui Ticket</span>
<svg style="left:433px;top:596px" width="12" height="4" viewBox="0 0 12 4"><rect width="12" height="4" fill="#1a5fd0"/><rect y="0" width="12" height="1.3" fill="#4f94ee"/></svg>
<span class="t " id="t106" style="left:450px;top:591px;letter-spacing:-0.444px;">Excl.Pesa<u>g</u>em</span>
<svg style="left:530px;top:590px" width="14" height="15" viewBox="0 0 14 15"><path d="M2.6 12 C0.6 8 2 3.6 6.4 3" stroke="#2a9a2a" stroke-width="3.4" fill="none"/><path d="M2.6 12 C0.6 8 2 3.6 6.4 3" stroke="#5fd04a" stroke-width="2" fill="none"/><path d="M5.6 0 L10.4 3 L5.6 6.4 Z" fill="#3fb83a" stroke="#2a8a2a" stroke-width="0.5"/><path d="M11.4 3.6 C13.6 7.6 12 12 7.6 12.4" stroke="#c8341a" stroke-width="3.4" fill="none"/><path d="M11.4 3.6 C13.6 7.6 12 12 7.6 12.4" stroke="#f4602c" stroke-width="2" fill="none"/><path d="M8.4 9 L3.8 12.4 L8.4 15 Z" fill="#e8481c" stroke="#b8300e" stroke-width="0.5"/><path d="M8.6 5 C10 6.4 10 8.4 9 9.6" stroke="#f8c030" stroke-width="1.6" fill="none"/></svg>
<span class="t " id="t107" style="left:550px;top:591px;letter-spacing:-0.143px;">En<u>t</u>rada/Saída</span>
<div class="btn" style="left:21px;top:620px;width:98px;height:42px;"></div>
<svg style="left:46px;top:633px" width="16" height="16" viewBox="0 0 16 16"><defs><radialGradient id="hg47634" cx="0.4" cy="0.3" r="0.8"><stop offset="0" stop-color="#8cc4fa"/><stop offset="1" stop-color="#1a58c0"/></radialGradient></defs><circle cx="8.5" cy="8.7" r="6.9" fill="#8d97a8" opacity="0.6"/><circle cx="8" cy="8" r="6.7" fill="#f6f8fb" stroke="#a4adbc" stroke-width="0.7"/><circle cx="8" cy="8" r="5.5" fill="url(#hg47634)"/><text x="8" y="11.4" font-family="Liberation Sans" font-size="9.5" font-weight="bold" fill="#fff" text-anchor="middle">?</text></svg>
<span class="t " id="t108" style="left:66px;top:634px;letter-spacing:-0.231px;">A<u>j</u>uda</span>
<div class="btn" style="left:1151px;top:620px;width:98px;height:42px;"></div>
<svg style="left:1181px;top:632.5px" width="16" height="16" viewBox="0 0 16 16"><defs><linearGradient id="dg2" x1="0" y1="0" x2="1" y2="0"><stop offset="0" stop-color="#50508a"/><stop offset="0.4" stop-color="#8e8ec8"/><stop offset="1" stop-color="#6a6aa6"/></linearGradient></defs><path d="M6 1.6 L15 0.6 V15.4 L6 14.4 Z" fill="url(#dg2)" stroke="#44447a" stroke-width="0.7"/><path d="M8.4 2.2 V13.8" stroke="#c4c4ea" stroke-width="0.9"/><path d="M10.6 5 h1.6" stroke="#f0f0ff" stroke-width="1"/><path d="M0.7 6.2 H4 V4.2 L8 8 L4 11.8 V9.8 H0.7 Z" fill="#3fd42e" stroke="#1c8c16" stroke-width="0.8" stroke-linejoin="round"/></svg>
<span class="t " id="t109" style="left:1201px;top:634px;letter-spacing:-0.450px;"><u>S</u>air</span>
<div class="btn" style="left:830px;top:565px;width:23px;height:20px;"></div>
<div class="btn" style="left:856px;top:565px;width:23px;height:20px;"></div>
<div class="btn" style="left:882px;top:565px;width:23px;height:20px;"></div>
<div class="btn" style="left:908px;top:565px;width:23px;height:20px;"></div>
<div class="btn" style="left:934px;top:565px;width:23px;height:20px;"></div>
<div class="btn" style="left:960px;top:565px;width:23px;height:20px;"></div>
<div class="btn" style="left:986px;top:565px;width:23px;height:20px;"></div>
<div class="btn" style="left:1012px;top:565px;width:23px;height:20px;"></div>
<svg style="left:833px;top:568px" width="17" height="14" viewBox="0 0 17 14"><path d="M2.6 4.6 L7 8.6" stroke="#70747c" stroke-width="4.2" stroke-linecap="round"/><path d="M7.6 3.4 L12.6 7.4" stroke="#888c94" stroke-width="4.2" stroke-linecap="round"/><path d="M5 4 L9 4.6" stroke="#5e626a" stroke-width="2"/><circle cx="7.4" cy="9" r="2.1" fill="#e6edf6" stroke="#7c828c" stroke-width="0.8"/><circle cx="13" cy="7.8" r="2.1" fill="#e6edf6" stroke="#7c828c" stroke-width="0.8"/></svg>
<svg style="left:859px;top:567px" width="17" height="17" viewBox="0 0 17 17"><path d="M5.6 4.6 H13.6 L16 7 V15.6 H5.6 Z" fill="#f4f8fd" stroke="#2c3e74" stroke-width="0.9"/><path d="M7 9 h7.6 M7 11.4 h7.6 M7 13.6 h7.6 M10 8 v7 M12.8 8 v7" stroke="#a9c0e4" stroke-width="0.7"/><rect x="1" y="1.4" width="9" height="8.6" rx="0.8" fill="#3aa24e" stroke="#1d6e30" stroke-width="0.8"/><rect x="1.6" y="2" width="7.8" height="3.4" fill="#7fd08a" opacity="0.7"/><path d="M3.4 3.4 L7.6 8 M7.6 3.4 L3.4 8" stroke="#f2fff2" stroke-width="1.5"/></svg>
<svg style="left:885px;top:567px" width="17" height="16" viewBox="0 0 17 16"><rect x="1" y="1" width="14" height="14" rx="2" fill="#fff" stroke="#2d86e0" stroke-width="1.8"/><rect x="1.8" y="1.6" width="12.4" height="2.6" fill="#3f97ee"/><path d="M4 5 v9 M6.4 5 v9 M2 7.6 h12 M2 10 h12 M2 12.4 h12 M9 8 v6 M11.6 8 v6" stroke="#f0945a" stroke-width="0.7"/><path d="M6.6 6.4 C8 3.6 15.6 3.4 16.4 5.6 C16.8 8 13 9.6 10 9 C8.6 8.8 7 8 6.6 6.4 Z" fill="#f6c65a" stroke="#c8922a" stroke-width="0.6"/></svg>
<svg style="left:911px;top:567px" width="16" height="16" viewBox="0 0 16 16"><rect x="1" y="1" width="14" height="14" rx="2" fill="#fff" stroke="#2d86e0" stroke-width="1.8"/><rect x="1.8" y="1.6" width="12.4" height="2.4" fill="#3f97ee"/><path d="M5.6 13 V6.8" stroke="#d41c24" stroke-width="2.2"/><path d="M2.8 8 L5.6 4.6 L8.4 8 Z" fill="#d41c24"/><path d="M10.6 5.4 V11.4" stroke="#1f8a34" stroke-width="2.2"/><path d="M7.8 10.4 L10.6 13.8 L13.4 10.4 Z" fill="#1f8a34"/></svg>
<svg style="left:939px;top:570px" width="13" height="11" viewBox="0 0 15 13"><path d="M7.6 0.8 C12 0.8 14.4 3.6 14.4 6.4 C14.4 9 12.6 9.6 11 9 C9.6 8.6 9 9.6 9.4 10.6 C9.8 12 8.6 12.4 7 12.2 C3 12 0.6 9.6 0.6 6.4 C0.6 3.2 3.6 0.8 7.6 0.8 Z" fill="#f0c878" stroke="#c49440" stroke-width="0.8"/><circle cx="4" cy="5" r="1.3" fill="#9a6ab0"/><circle cx="7.4" cy="3.4" r="1.3" fill="#6a94c8"/><circle cx="10.8" cy="5" r="1.3" fill="#7ab05a"/><circle cx="4.6" cy="8.6" r="1.2" fill="#d8a850"/></svg>
<svg style="left:964px;top:568px" width="15" height="15" viewBox="0 0 16 16"><path d="M15.30 6.79 L15.30 9.21 L13.04 9.29 L12.48 10.65 L14.02 12.30 L12.30 14.02 L10.65 12.48 L9.29 13.04 L9.21 15.30 L6.79 15.30 L6.71 13.04 L5.35 12.48 L3.70 14.02 L1.98 12.30 L3.52 10.65 L2.96 9.29 L0.70 9.21 L0.70 6.79 L2.96 6.71 L3.52 5.35 L1.98 3.70 L3.70 1.98 L5.35 3.52 L6.71 2.96 L6.79 0.70 L9.21 0.70 L9.29 2.96 L10.65 3.52 L12.30 1.98 L14.02 3.70 L12.48 5.35 L13.04 6.71 Z" fill="#bebbe4" stroke="#8a86c2" stroke-width="0.8" stroke-linejoin="round"/><circle cx="8" cy="8" r="2.4" fill="#f4f3fb" stroke="#8a86c2" stroke-width="0.8"/></svg>
<svg style="left:990px;top:567px" width="15" height="16" viewBox="0 0 15 16"><path d="M1 9 L4 7 H11 L14 9 V13 L8 15.4 L1 13 Z" fill="#d4d8e0" stroke="#6a7284" stroke-width="0.7"/><path d="M1 13 L8 15.4 L14 13 V11.4 L8 13.8 L1 11.4 Z" fill="#4e586c"/><path d="M5.6 0.8 H9.4 V4.4 H12 L7.5 9 L3 4.4 H5.6 Z" fill="#3fc23a" stroke="#1f8a1f" stroke-width="0.7"/></svg>
<svg style="left:1017px;top:567px" width="13" height="16" viewBox="0 0 13 16"><rect x="0.8" y="1.6" width="11.4" height="13.6" rx="1" fill="#f4f8ff" stroke="#2f6fd0" stroke-width="1.3"/><rect x="4" y="0.4" width="5" height="2.6" fill="#7e8aa0"/><path d="M3.4 5.6 L5 7.4 L8.6 3.6" stroke="#d8281c" stroke-width="1.3" fill="none"/><path d="M3.4 10.2 L5 12 L8.6 8.2" stroke="#d8281c" stroke-width="1.3" fill="none"/></svg>
<div class="" style="left:1043px;top:565px;width:1px;height:20px;background:#8c8c8c"></div>
<div class="btn" style="left:1050px;top:565px;width:98px;height:20px;"></div>
<svg style="left:1059px;top:567px" width="15" height="15" viewBox="0 0 15 15"><defs><radialGradient id="atg" cx="0.4" cy="0.35" r="0.75"><stop offset="0" stop-color="#7fe070"/><stop offset="1" stop-color="#2f9a2c"/></radialGradient></defs><circle cx="7.5" cy="7.5" r="6.8" fill="url(#atg)" stroke="#237a22" stroke-width="0.9"/><path d="M7.5 3 L10.4 7 H8.6 L7.5 5.4 L6.4 7 H4.6 Z" fill="#d8f8cc"/><path d="M3.4 8 L5 11.4 H8 L7 9.8 H5.8 L5 8 Z" fill="#c4f0b4"/><path d="M11.6 8 L10 11.4 H8.6 V9.8 H9.2 L10 8 Z" fill="#c4f0b4"/></svg>
<span class="t " id="t110" style="left:1079.5px;top:568px;letter-spacing:-0.226px;">F5-Atuali<u>z</u>ar</span>
<div class="btn" style="left:1151px;top:565px;width:83px;height:20px;"></div>
<svg style="left:1160px;top:567px" width="16" height="15" viewBox="0 0 16 15"><defs><linearGradient id="flg" x1="0" y1="0" x2="1" y2="0"><stop offset="0" stop-color="#f6f7f9"/><stop offset="1" stop-color="#8e98a8"/></linearGradient></defs><path d="M0.6 2 L5.2 8 V11.4 L8.2 13.4 V8 L12.8 2 Z" fill="url(#flg)" stroke="#6e7888" stroke-width="0.8" stroke-linejoin="round"/><ellipse cx="6.7" cy="2" rx="6.1" ry="1.6" fill="#dfe3ea" stroke="#6e7888" stroke-width="0.8"/><ellipse cx="6.7" cy="2.2" rx="4.4" ry="0.8" fill="#8a94a4"/><path d="M7.6 10.4 L9.8 13.4 L14 8" stroke="#1f6fe0" stroke-width="2" fill="none"/></svg>
<span class="t " id="t111" style="left:1179.5px;top:568px;letter-spacing:-0.205px;">F9-Filtros</span>
<div class="btn" style="left:1236px;top:565px;width:11px;height:20px;"></div>
<svg style="left:1238.5px;top:573px" width="6" height="3" viewBox="0 0 6 3"><path d="M0 0 H6 L3 3 Z" fill="#000"/></svg>
<div class="" style="left:2px;top:675px;width:1268px;height:5px;background:#eef1f6"></div>
<div class="" style="left:269px;top:675px;width:744px;height:5px;background:#ececec"></div>
<div class="" style="left:2px;top:679px;width:265px;height:1px;background:#8c8c8c"></div>
<div class="" style="left:267px;top:675px;width:2px;height:5px;background:#fff"></div>
<div class="" style="left:453px;top:675px;width:1px;height:5px;background:#5a5a5a"></div>
<div class="" style="left:454px;top:679px;width:816px;height:1px;background:#8e9092"></div>
<div class="" style="left:1013px;top:675px;width:2px;height:4px;background:#fff"></div>
<div class="" style="left:1015px;top:675px;width:255px;height:4px;background:#e8edf5"></div>
<div class="" style="left:2px;top:680px;width:1222px;height:33px;background:#ffff0a"></div>
<div class="" style="left:1224px;top:680px;width:46px;height:33px;background:linear-gradient(#c6cdd9 0,#b2bbcb 30%,#a6b0c3 70%,#9ca7ba 100%)"></div>
<div class="" style="left:1224px;top:680px;width:1px;height:33px;background:#8e99ad"></div>
<span class="t " id="t112" style="left:1236.5px;top:689.5px;letter-spacing:-0.391px;color:#4c5870;font-size:11px">2.D-M</span>
<span class="t b" id="t113" style="left:503px;top:696px;letter-spacing:0;transform:scaleX(1.0353);transform-origin:left center;font-size:11.5px">Informe o percentual de grãos inteiros</span>
<div class="" style="left:0px;top:713px;width:1272px;height:1px;background:#77771a"></div>
<div class="" style="left:1224px;top:713px;width:48px;height:1px;background:#7d8798"></div>
<div class="" style="left:0px;top:714px;width:1272px;height:1px;background:#cfcfcf"></div>
</body></html>
